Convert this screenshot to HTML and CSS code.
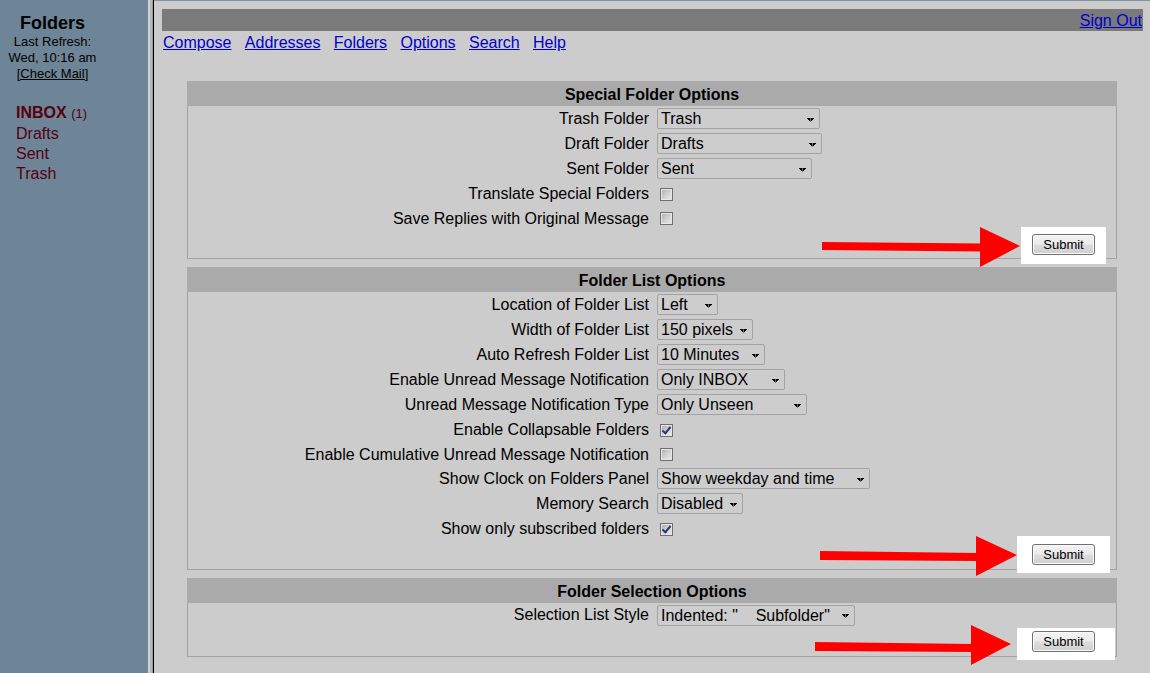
FILE: index.html
```html
<!DOCTYPE html>
<html lang="en">
<head>
<meta charset="utf-8">
<title>Options - Folder Preferences</title>
<link rel="stylesheet" href="styles.css">
</head>
<body>
<aside class="sidebar">
  <div class="sb-head">
    <div class="sb-title">Folders</div>
    <div class="sb-refresh">Last Refresh:<br>Wed, 10:16 am<br><a href="#">[Check Mail]</a></div>
  </div>
  <ul class="folders">
    <li><a href="#"><b>INBOX</b> <span class="count">(1)</span></a></li>
    <li><a href="#">Drafts</a></li>
    <li><a href="#">Sent</a></li>
    <li><a href="#">Trash</a></li>
  </ul>
</aside>
<div class="divider"></div>
<main class="main">
  <div class="topbar"><a href="#">Sign Out</a></div>
  <nav class="nav"><a href="#">Compose</a>&nbsp;&nbsp;&nbsp;<a href="#">Addresses</a>&nbsp;&nbsp;&nbsp;<a href="#">Folders</a>&nbsp;&nbsp;&nbsp;<a href="#">Options</a>&nbsp;&nbsp;&nbsp;<a href="#">Search</a>&nbsp;&nbsp;&nbsp;<a href="#">Help</a></nav>

  <form class="opts">
    <section class="opt">
      <div class="opt-title">Special Folder Options</div>
      <div class="opt-body">
        <div class="row"><label for="trash">Trash Folder</label><div class="ctl"><select id="trash" class="sel sel-trash"><option>[ Do not use Trash ]</option><option>INBOX</option><option>Drafts</option><option>Sent</option><option selected>Trash</option></select></div></div>
        <div class="row"><label for="draft">Draft Folder</label><div class="ctl"><select id="draft" class="sel sel-drafts"><option>[ Do not use Drafts ]</option><option>INBOX</option><option selected>Drafts</option><option>Sent</option><option>Trash</option></select></div></div>
        <div class="row"><label for="sent">Sent Folder</label><div class="ctl"><select id="sent" class="sel sel-sent"><option>[ Do not use Sent ]</option><option>INBOX</option><option>Drafts</option><option selected>Sent</option><option>Trash</option></select></div></div>
        <div class="row cbrow"><label for="translate">Translate Special Folders</label><div class="ctl"><input type="checkbox" id="translate" class="cb"></div></div>
        <div class="row cbrow"><label for="savereply">Save Replies with Original Message</label><div class="ctl"><input type="checkbox" id="savereply" class="cb"></div></div>
        <div class="submit-row">
          <svg class="mark" viewBox="0 0 300 50" width="300" height="50" aria-hidden="true"><rect x="213" y="5" width="85" height="37" fill="#fff"/><polygon points="14,20 174,21.5 174,29.5 14,28" fill="#f00"/><polygon points="172,5 212,24 172,45" fill="#f00"/></svg>
          <button type="button" class="btn">Submit</button>
        </div>
      </div>
    </section>

    <section class="opt">
      <div class="opt-title">Folder List Options</div>
      <div class="opt-body">
        <div class="row"><label for="loc">Location of Folder List</label><div class="ctl"><select id="loc" class="sel sel-left"><option selected>Left</option><option>Right</option></select></div></div>
        <div class="row"><label for="width">Width of Folder List</label><div class="ctl"><select id="width" class="sel sel-width"><option>100 pixels</option><option selected>150 pixels</option><option>200 pixels</option></select></div></div>
        <div class="row"><label for="refresh">Auto Refresh Folder List</label><div class="ctl"><select id="refresh" class="sel sel-refresh"><option>Never</option><option selected>10 Minutes</option><option>30 Minutes</option></select></div></div>
        <div class="row"><label for="unread">Enable Unread Message Notification</label><div class="ctl"><select id="unread" class="sel sel-unread"><option>No Notification</option><option selected>Only INBOX</option><option>All Folders</option></select></div></div>
        <div class="row"><label for="unreadtype">Unread Message Notification Type</label><div class="ctl"><select id="unreadtype" class="sel sel-type"><option selected>Only Unseen</option><option>Unseen and Total</option></select></div></div>
        <div class="row cbrow"><label for="collapse">Enable Collapsable Folders</label><div class="ctl"><input type="checkbox" id="collapse" class="cb" checked></div></div>
        <div class="row cbrow"><label for="cumul">Enable Cumulative Unread Message Notification</label><div class="ctl"><input type="checkbox" id="cumul" class="cb"></div></div>
        <div class="row"><label for="clock">Show Clock on Folders Panel</label><div class="ctl"><select id="clock" class="sel sel-clock"><option>Don't Show</option><option selected>Show weekday and time</option><option>Show time only</option></select></div></div>
        <div class="row"><label for="memsearch">Memory Search</label><div class="ctl"><select id="memsearch" class="sel sel-mem"><option selected>Disabled</option><option>1</option><option>2</option></select></div></div>
        <div class="row cbrow"><label for="subscribed">Show only subscribed folders</label><div class="ctl"><input type="checkbox" id="subscribed" class="cb" checked></div></div>
        <div class="submit-row">
          <svg class="mark" viewBox="0 0 300 50" width="300" height="50" aria-hidden="true"><rect x="209" y="3" width="93" height="37" fill="#fff"/><polygon points="12,18 170,20 170,28 12,27" fill="#f00"/><polygon points="168,3 209,22 168,43" fill="#f00"/></svg>
          <button type="button" class="btn">Submit</button>
        </div>
      </div>
    </section>

    <section class="opt">
      <div class="opt-title">Folder Selection Options</div>
      <div class="opt-body">
        <div class="row"><label for="selstyle">Selection List Style</label><div class="ctl"><select id="selstyle" class="sel sel-style"><option>Long: "Folder.Subfolder"</option><option selected>Indented: "&nbsp;&nbsp;&nbsp;&nbsp;Subfolder"</option></select></div></div>
        <div class="submit-row">
          <svg class="mark" viewBox="0 0 300 50" width="300" height="50" aria-hidden="true"><rect x="209" y="8" width="98" height="32" fill="#fff"/><polygon points="7,22 165,24 165,32 7,31" fill="#f00"/><polygon points="163,5 203,24 163,45" fill="#f00"/></svg>
          <button type="button" class="btn">Submit</button>
        </div>
      </div>
    </section>
  </form>
</main>
</body>
</html>
```
FILE: styles.css
```css
html, body {
  height: 100%;
}

body {
  margin: 0;
  display: flex;
  min-height: 100vh;
  font-family: "Liberation Sans", Arial, sans-serif;
  font-size: 16px;
  color: #000;
  background: #cccccc;
}

/* ---------- left folder frame ---------- */
.sidebar {
  width: 148px;
  flex: none;
  background: #6d8596;
}

.sb-head {
  width: 105px;
  padding-top: 12px;
  text-align: center;
}

.sb-title {
  font-size: 18px;
  font-weight: bold;
  line-height: 22px;
}

.sb-refresh {
  font-size: 13px;
  line-height: 16px;
}

.sb-refresh a {
  color: #000;
}

.folders {
  list-style: none;
  margin: 21px 0 0;
  padding: 0 0 0 16px;
  font-size: 16px;
  line-height: 20px;
}

.folders a {
  color: #560010;
  text-decoration: none;
}

.folders .count {
  font-size: 13px;
}

/* ---------- frame divider ---------- */
.divider {
  width: 6px;
  flex: none;
  background: linear-gradient(to right,
    #d2d2d2 0, #d2d2d2 2px,
    #b9b9b9 2px, #b9b9b9 4px,
    #9c9c9c 4px, #9c9c9c 5px,
    #000 5px, #000 6px);
}

/* ---------- right frame ---------- */
.main {
  flex: 1;
  min-width: 0;
  border-top: 1px solid #8094a6;
  padding: 8px 7px 0 8px;
  background: #cccccc;
}

.main a {
  color: #0000cc;
}

.topbar {
  height: 21px;
  padding: 1px 1px 0 0;
  line-height: 22px;
  background: #7a7a7a;
  text-align: right;
}

.nav {
  height: 23px;
  line-height: 23px;
  padding-left: 1px;
  white-space: nowrap;
}

.opts {
  margin: 27px 0 0;
}

/* ---------- option sections ---------- */
.opt {
  width: 930px;
  margin: 0 0 8px 25px;
}

.opt-title {
  box-sizing: border-box;
  height: 25px;
  padding-top: 2px;
  line-height: 23px;
  background: #aaaaaa;
  text-align: center;
  font-weight: bold;
}

.opt-body {
  border: 1px solid #a2a2a2;
  border-top: 0;
}

.row {
  display: grid;
  grid-template-columns: 1fr 1fr;
  align-items: center;
  height: 25px;
}

.row.cbrow {
  box-sizing: border-box;
  height: 24.5px;
  padding-top: 2px;
}

.row label {
  text-align: right;
  padding-right: 3px;
  white-space: nowrap;
}

.ctl {
  display: flex;
  align-items: center;
  padding-left: 5px;
}

/* select boxes (classic windows look) */
.sel {
  -webkit-appearance: none;
  appearance: none;
  box-sizing: border-box;
  height: 21px;
  margin: 0;
  padding: 0 18px 0 3px;
  border: 1px solid #a3a3a3;
  border-radius: 2px;
  font-family: "Liberation Sans", Arial, sans-serif;
  font-size: 16px;
  color: #000;
  background-color: #cdcdcd;
  background-image:
    linear-gradient(45deg, transparent 50%, #000 50%),
    linear-gradient(135deg, #000 50%, transparent 50%);
  background-size: 3.5px 4px, 3.5px 4px;
  background-position: calc(100% - 8.5px) 8.5px, calc(100% - 5px) 8.5px;
  background-repeat: no-repeat;
}

.sel-trash { width: 163px; }
.sel-drafts { width: 165px; }
.sel-sent { width: 155px; }
.sel-left { width: 61px; }
.sel-width { width: 96px; }
.sel-refresh { width: 108px; }
.sel-unread { width: 128px; }
.sel-type { width: 150px; }
.sel-clock { width: 213px; }
.sel-mem { width: 86px; }
.sel-style { width: 198px; }

/* check boxes */
.cb {
  -webkit-appearance: none;
  appearance: none;
  position: relative;
  box-sizing: border-box;
  width: 13px;
  height: 13px;
  margin: 0 0 0 3px;
  border: 1px solid #6f6f6f;
  background: linear-gradient(135deg, #a9a9a9 0%, #d4d4d4 55%, #ececec 100%);
  box-shadow: inset 0 0 0 1px #e6e6e6;
}

.cb:checked::after {
  content: "";
  position: absolute;
  left: 3px;
  top: 0;
  width: 3px;
  height: 7px;
  border-right: 2px solid #27357a;
  border-bottom: 2px solid #27357a;
  transform: rotate(40deg);
}

/* submit row + annotation */
.submit-row {
  position: relative;
  height: 28px;
  display: flex;
  justify-content: flex-end;
  align-items: center;
  padding-right: 21px;
}

.mark {
  position: absolute;
  left: 620px;
  top: -8px;
  overflow: visible;
}

.btn {
  position: relative;
  z-index: 1;
  box-sizing: border-box;
  width: 63px;
  height: 21px;
  margin: 0;
  padding: 0;
  border: 1px solid #707070;
  border-radius: 3px;
  font-family: "Liberation Sans", Arial, sans-serif;
  font-size: 13px;
  color: #000;
  background: linear-gradient(#f3f3f3 0%, #ebebeb 48%, #dddddd 52%, #cfcfcf 100%);
  box-shadow: inset 0 0 0 1px #fbfbfb;
}
```
